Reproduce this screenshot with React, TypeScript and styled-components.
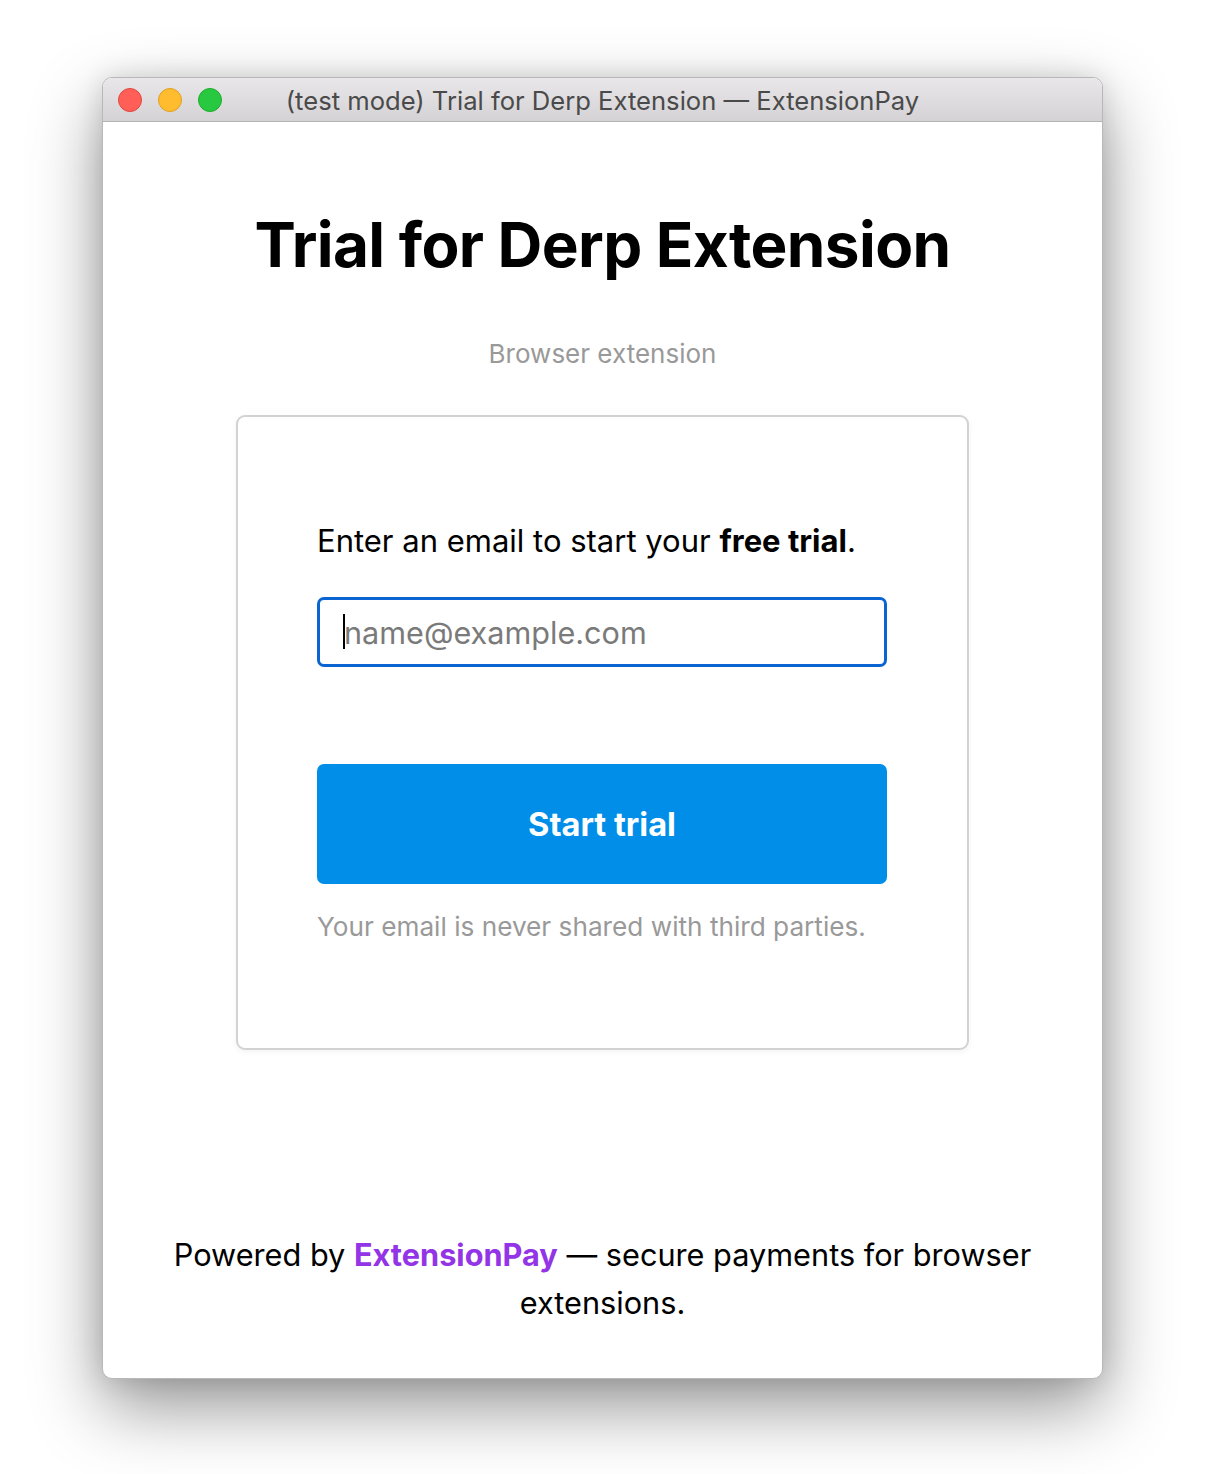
import React from "react";
import styled, { createGlobalStyle } from "styled-components";

const Global = createGlobalStyle`
  html, body { margin: 0; padding: 0; background: #ffffff; }
  body { font-family: Inter, "Noto Sans", sans-serif; -webkit-font-smoothing: antialiased; }
  * { box-sizing: border-box; }
`;

const Stage = styled.div`
  width: 1208px;
  height: 1474px;
  padding: 77px 0 0 102px;
  background: #ffffff;
`;

const Window = styled.div`
  width: 1001px;
  height: 1302px;
  border-radius: 10px;
  background: #ffffff;
  border: 1px solid #b8b8b8;
  box-shadow: 0 28px 70px rgba(0, 0, 0, 0.42), 0 0 26px rgba(0, 0, 0, 0.12);
  overflow: hidden;
  display: flex;
  flex-direction: column;
`;

const TitleBar = styled.div`
  height: 44px;
  flex: none;
  display: grid;
  grid-template-columns: 1fr auto 1fr;
  align-items: center;
  background: linear-gradient(#e9e7e9, #d4d2d4);
  border-bottom: 1px solid #b4b4b4;
  padding: 0 15px;
`;

const Lights = styled.div`
  display: flex;
  gap: 16px;
  align-items: center;
`;

const Light = styled.span<{ $fill: string; $edge: string }>`
  width: 24px;
  height: 24px;
  border-radius: 50%;
  background: ${(p) => p.$fill};
  border: 1px solid ${(p) => p.$edge};
`;

const WindowTitle = styled.div`
  font-family: Inter, "Liberation Sans", sans-serif;
  font-size: 25.6px;
  line-height: 30px;
  padding-top: 3px;
  color: #4a4a4a;
  white-space: nowrap;
`;

const Content = styled.div`
  flex: 1;
  display: flex;
  flex-direction: column;
  align-items: center;
`;

const Heading = styled.h1`
  margin: 85px 0 0;
  font-size: 62px;
  line-height: 76px;
  font-weight: 700;
  color: #000;
  letter-spacing: -0.6px;
`;

const Subtitle = styled.div`
  margin-top: 56px;
  font-size: 26px;
  line-height: 30px;
  color: #999999;
`;

const Card = styled.div`
  margin-top: 46px;
  width: 733px;
  height: 635px;
  border: 2px solid #d2d2d2;
  border-radius: 9px;
  box-shadow: 0 2px 6px rgba(0, 0, 0, 0.05);
  padding: 106px 79px 0;
  display: flex;
  flex-direction: column;
`;

const Prompt = styled.p`
  margin: 0;
  font-size: 31px;
  line-height: 36px;
  color: #000;
  b { font-weight: 700; }
`;

const Field = styled.div`
  position: relative;
  margin-top: 38px;
`;

const EmailInput = styled.input`
  display: block;
  width: 570px;
  height: 70px;
  border: 3px solid #0a64d2;
  border-radius: 7px;
  padding: 0 0 0 24px;
  font-family: Inter, "Noto Sans", sans-serif;
  font-size: 30.6px;
  color: #000;
  outline: none;
  &::placeholder { color: #7a7a7a; }
`;

const Caret = styled.span`
  position: absolute;
  left: 26px;
  top: 17px;
  width: 2px;
  height: 35px;
  background: #000;
`;

const StartButton = styled.button`
  margin-top: 97px;
  width: 570px;
  height: 120px;
  border: none;
  border-radius: 7px;
  background: #008ee8;
  color: #fff;
  font-family: Inter, "Noto Sans", sans-serif;
  font-size: 32.6px;
  font-weight: 700;
  cursor: pointer;
`;

const Note = styled.div`
  margin-top: 27px;
  font-size: 26.2px;
  line-height: 32px;
  color: #999999;
`;

const Footer = styled.p`
  margin: 181px 0 0;
  width: 900px;
  text-align: center;
  font-size: 30.7px;
  line-height: 48px;
  color: #000;
`;

const Brand = styled.a`
  color: #9334e6;
  font-weight: 700;
  text-decoration: none;
`;

export default function App() {
  return (
    <>
      <Global />
      <Stage>
        <Window>
          <TitleBar>
            <Lights>
              <Light $fill="#ff5f57" $edge="#e2463f" />
              <Light $fill="#febc2e" $edge="#dfa123" />
              <Light $fill="#28c840" $edge="#1dad2b" />
            </Lights>
            <WindowTitle>(test mode) Trial for Derp Extension — ExtensionPay</WindowTitle>
            <div />
          </TitleBar>
          <Content>
            <Heading>Trial for Derp Extension</Heading>
            <Subtitle>Browser extension</Subtitle>
            <Card>
              <Prompt>
                Enter an email to start your <b>free trial</b>.
              </Prompt>
              <Field>
                <EmailInput type="email" placeholder="name@example.com" />
                <Caret />
              </Field>
              <StartButton>Start trial</StartButton>
              <Note>Your email is never shared with third parties.</Note>
            </Card>
            <Footer>
              Powered by <Brand href="#">ExtensionPay</Brand> — secure payments for browser extensions.
            </Footer>
          </Content>
        </Window>
      </Stage>
    </>
  );
}
